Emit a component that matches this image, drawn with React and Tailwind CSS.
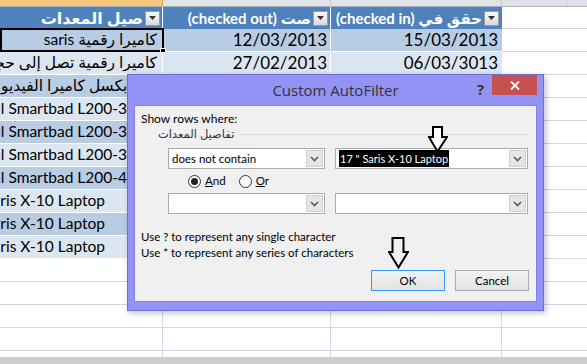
import React from "react";

const dark = "bg-[#b8cce4]";
const light = "bg-[#dce6f1]";

const data = [
  { a: "كاميرا  رقمية saris", dir: "rtl", pr: "pr-[5px]", b: "12/03/2013", c: "15/03/2013" },
  { a: "كاميرا رقمية تصل إلى حجم 16 ميجا", dir: "rtl", pr: "pr-[5px]", b: "27/02/2013", c: "06/03/3013" },
  { a: "ميجا بكسل كاميرا الفيديو الرقمية", dir: "rtl", pr: "pr-[3px]" },
  { a: "Samsung Digital Smartbad L200-3", dir: "ltr", pr: "pr-[35px]" },
  { a: "Samsung Digital Smartbad L200-3", dir: "ltr", pr: "pr-[35px]" },
  { a: "Samsung Digital Smartbad L200-3", dir: "ltr", pr: "pr-[35px]" },
  { a: "Samsung Digital Smartbad L200-4", dir: "ltr", pr: "pr-[35px]" },
  { a: '17" Saris X-10 Laptop', dir: "ltr", pr: "pr-[57px]" },
  { a: '17" Saris X-10 Laptop', dir: "ltr", pr: "pr-[57px]" },
  { a: '17" Saris X-10 Laptop', dir: "ltr", pr: "pr-[57px]" },
];

function FilterButton() {
  return (
    <div className="flex h-[15px] w-[15px] shrink-0 items-center justify-center border border-[#9a9a9a] bg-linear-to-b from-[#fafafa] to-[#d9d9d9]">
      <svg width="7" height="4" viewBox="0 0 7 4">
        <path d="M0 0h7L3.5 4z" fill="#333" />
      </svg>
    </div>
  );
}

function Chevron() {
  return (
    <svg width="9" height="6" viewBox="0 0 9 6">
      <path d="M1 1l3.5 3.5L8 1" fill="none" stroke="#5a5a5a" strokeWidth="1.6" />
    </svg>
  );
}

function Combo({ width, children }) {
  return (
    <div className={`flex h-[21px] ${width} shrink-0 border border-[#acacac] bg-white`}>
      <div className="flex flex-1 items-center overflow-hidden whitespace-nowrap pl-[3px]">{children}</div>
      <div className="m-px flex w-[17px] items-center justify-center border border-[#d0d0d0] bg-[#e6e6e6]">
        <Chevron />
      </div>
    </div>
  );
}

function Radio({ checked }) {
  return (
    <span className="flex h-[13px] w-[13px] shrink-0 items-center justify-center rounded-full border border-[#333] bg-white">
      {checked ? <span className="h-[7px] w-[7px] rounded-full bg-[#222]" /> : null}
    </span>
  );
}

function Sheet() {
  return (
    <div className="flex h-full flex-col font-['Lato','DejaVu_Sans',sans-serif] text-black">
      {/* column letters strip */}
      <div className="flex h-[7px] shrink-0 border-b border-[#a9b0bb]">
        <div className="w-[163px] shrink-0 border-r border-[#e3a54a] bg-[#f6c67c]" />
        <div className="w-[168px] shrink-0 border-r border-[#c8cdd5] bg-[#dfe3e8]" />
        <div className="w-[171px] shrink-0 border-r border-[#c8cdd5] bg-[#dfe3e8]" />
        <div className="w-[65px] shrink-0 border-r border-[#c8cdd5] bg-[#dfe3e8]" />
        <div className="flex-1 bg-[#dfe3e8]" />
      </div>

      {/* table header */}
      <div className="flex h-[22px] shrink-0 text-[15px] font-bold text-white">
        <div className="flex w-[163px] shrink-0 items-center justify-end gap-[2px] overflow-hidden whitespace-nowrap border-r border-white bg-[#4f81bd] pr-[2px]">
          <span dir="rtl" className="text-[16px]">صيل المعدات</span>
          <FilterButton />
        </div>
        <div className="flex w-[168px] shrink-0 items-center justify-end gap-[2px] overflow-hidden whitespace-nowrap border-r border-white bg-[#4f81bd] pr-[2px]">
          <span dir="ltr">(checked out) صت</span>
          <FilterButton />
        </div>
        <div className="flex w-[171px] shrink-0 items-center justify-end gap-[2px] overflow-hidden whitespace-nowrap bg-[#4f81bd] pr-[3px]">
          <span dir="ltr">(checked in) حقق في</span>
          <FilterButton />
        </div>
        <div className="flex-1 border-b border-[#d0d7e5] bg-white" />
      </div>

      {/* table rows */}
      {data.map((row, i) => {
        const bg = i % 2 === 0 ? dark : light;
        return (
          <div key={i} className="relative flex h-[23px] shrink-0 text-[17px]">
            <div className={`flex w-[163px] shrink-0 items-center justify-end overflow-hidden whitespace-nowrap border-b border-r border-white text-[15.5px] ${bg} ${row.pr}`}>
              <span dir={row.dir} className="shrink-0">{row.a}</span>
            </div>
            <div className={`flex w-[168px] shrink-0 items-center justify-end border-b border-r border-white ${bg} pr-[3px]`}>
              {row.b}
            </div>
            <div className={`flex w-[171px] shrink-0 items-center justify-end border-b border-white ${bg} pr-[4px]`}>
              {row.c}
            </div>
            <div className="flex-1 border-b border-[#d0d7e5] bg-white" />
            {i === 0 ? (
              <div className="absolute left-0 top-[-1px] h-[24px] w-[164px] border-2 border-black">
                <div className="absolute bottom-[-4px] right-[-4px] h-[6px] w-[6px] border border-white bg-black" />
              </div>
            ) : null}
          </div>
        );
      })}

      {/* empty rows */}
      {[0, 1, 2, 3].map((i) => (
        <div key={i} className="flex h-[23px] shrink-0">
          <div className="w-[163px] shrink-0 border-b border-r border-[#d0d7e5]" />
          <div className="w-[168px] shrink-0 border-b border-r border-[#d0d7e5]" />
          <div className="w-[171px] shrink-0 border-b border-r border-[#d0d7e5]" />
          <div className="flex-1 border-b border-[#d0d7e5]" />
        </div>
      ))}
      <div className="flex h-[6px] shrink-0">
        <div className="w-[163px] shrink-0 border-r border-[#d0d7e5]" />
        <div className="w-[168px] shrink-0 border-r border-[#d0d7e5]" />
        <div className="w-[171px] shrink-0 border-r border-[#d0d7e5]" />
        <div className="flex-1" />
      </div>
      <div className="h-[7px] shrink-0 bg-[#cdcdcd]" />
    </div>
  );
}

function AutoFilterDialog() {
  return (
    <div className="absolute left-[127px] top-[74px] flex h-[237px] w-[417px] flex-col border border-[#6e6ed8] bg-[#9393f5] font-['Lato','DejaVu_Sans',sans-serif] shadow-[2px_2px_6px_rgba(0,0,0,0.25)]">
      <div className="relative flex h-[30px] shrink-0 items-center justify-center font-['Open_Sans',sans-serif] text-[15px] text-[#333]">
        Custom AutoFilter
        <span className="absolute left-[349px] top-[3px] text-[15px] font-bold text-[#333]">?</span>
        <div className="absolute right-[6px] top-0 flex h-[20px] w-[45px] items-center justify-center bg-[#c75050]">
          <svg width="10" height="9" viewBox="0 0 10 9">
            <path d="M1 0.5l8 8M9 0.5l-8 8" stroke="#fff" strokeWidth="1.8" />
          </svg>
        </div>
      </div>

      <div className="relative mx-[6px] flex h-[197px] shrink-0 flex-col border border-[#8383dc] bg-[#f0f0f0] text-[11.5px] text-black">
        <div className="ml-[6px] mt-[5px] h-[16px] text-[12px] leading-[16px]">Show rows where:</div>

        <div className="ml-[23px] mr-[7px] flex h-[14px] items-center">
          <span dir="rtl" className="text-[#333]">تفاصيل المعدات</span>
          <div className="ml-[5px] h-px flex-1 bg-[#d5d5d5]" />
        </div>

        <div className="ml-[33px] mt-[7px] flex gap-[10px]">
          <Combo width="w-[157px]">does not contain</Combo>
          <Combo width="w-[193px]">
            <span className="bg-black px-px text-[11px] leading-[17px] text-white">17 " Saris X-10 Laptop</span>
          </Combo>
        </div>

        <div className="ml-[53px] mt-[5px] flex h-[14px] items-center">
          <Radio checked />
          <span className="ml-[4px]">
            <span className="underline">A</span>nd
          </span>
          <span className="ml-[13px]">
            <Radio />
          </span>
          <span className="ml-[4px]">
            <span className="underline">O</span>r
          </span>
        </div>

        <div className="ml-[33px] mt-[5px] flex gap-[10px]">
          <Combo width="w-[157px]" />
          <Combo width="w-[193px]" />
        </div>

        <div className="ml-[6px] mt-[15px] h-[16px] leading-[16px]">Use ? to represent any single character</div>
        <div className="ml-[6px] h-[16px] leading-[16px]">Use * to represent any series of characters</div>

        <div className="ml-[236px] mt-[9px] flex gap-[10px]">
          <button className="flex h-[21px] w-[74px] items-center justify-center border border-[#3399ff] bg-linear-to-b from-[#f2f2f2] to-[#e3e3e3]">
            OK
          </button>
          <button className="flex h-[21px] w-[74px] items-center justify-center border border-[#acacac] bg-linear-to-b from-[#f2f2f2] to-[#e3e3e3]">
            Cancel
          </button>
        </div>

        {/* annotation arrows */}
        <svg className="absolute left-[293px] top-[20px]" width="20" height="27" viewBox="0 0 20 27">
          <path d="M5 1H14V11H19L9.5 25.5L1 11H5Z" fill="#fff" stroke="#000" strokeWidth="2" strokeLinejoin="miter" />
        </svg>
        <svg className="absolute left-[253px] top-[131px]" width="21" height="32" viewBox="0 0 21 32">
          <path d="M4.5 1H15.5V15H20L10.5 30.5L1 15H4.5Z" fill="#f0f0f0" stroke="#000" strokeWidth="2" strokeLinejoin="miter" />
        </svg>
      </div>
    </div>
  );
}

export default function App() {
  return (
    <div className="relative h-[364px] w-[587px] overflow-hidden bg-white">
      <Sheet />
      <AutoFilterDialog />
    </div>
  );
}
